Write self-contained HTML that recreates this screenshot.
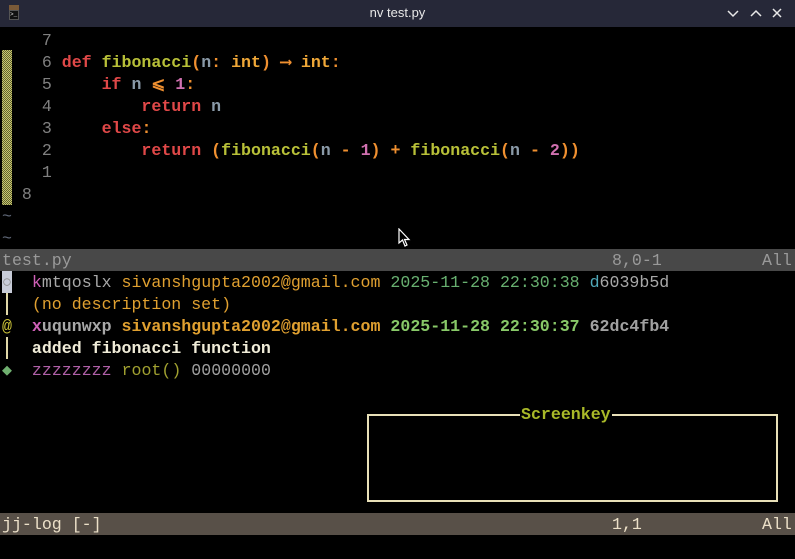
<!DOCTYPE html>
<html><head><meta charset="utf-8"><style>
html,body{margin:0;padding:0;background:#000;width:795px;height:559px;overflow:hidden;position:relative;font-family:"Liberation Mono","DejaVu Sans Mono",monospace;}
.r{position:absolute;left:2px;height:22px;line-height:24px;font-size:16.6px;white-space:pre;color:#a8a8a8;}
.tb{position:absolute;left:0;top:0;width:795px;height:27px;background:#262838;}
.tt{position:absolute;top:0;width:795px;text-align:center;line-height:26px;font-family:"Liberation Sans",sans-serif;font-size:13px;color:#e8e8e8;}
.ln{color:#808080;font-weight:normal}.k{color:#e04848}.f{color:#b8c038}.p{color:#f09030}.n{color:#8a9aa8}.t{color:#f0a838}.num{color:#d070b0}
.pk{color:#d060b8}.em{color:#e0a030}.dt{color:#68b070}.tl{color:#50a8b8}.gy{color:#a0a0a0}
.c{font-weight:bold}
b{font-weight:bold}
.sb{position:absolute;left:0;width:795px;height:22px;}
</style></head><body>
<div class="tb"></div>
<div style="position:absolute;left:9px;top:5px;width:10px;height:5px;background:#7a5a38"></div>
<div style="position:absolute;left:9px;top:10px;width:10px;height:10px;background:#111;border:1px solid #555;box-sizing:border-box;color:#ddd;font-size:6px;line-height:8px">&gt;_</div>
<div class="tt">nv test.py</div>
<svg style="position:absolute;left:724px;top:6px" width="60" height="16" viewBox="0 0 60 16" fill="none" stroke="#e8e8e8" stroke-width="1.5">
<path d="M4 5 L9 10 L14 5"/><path d="M27 10 L32 5 L37 10"/><path d="M49 3 L57 11 M57 3 L49 11"/></svg>

<div style="position:absolute;left:2px;top:50px;width:10px;height:155px;background:repeating-conic-gradient(#c8c870 0 25%,#606030 0 50%) 0 0/2px 2px"></div>

<div class="r" style="top:29px"><span class="ln">    7</span></div>
<div class="r c" style="top:51px"><span class="ln">    6 </span><span class="k">def</span> <span class="f">fibonacci</span><span class="p">(</span><span class="n">n</span><span class="p">:</span> <span class="t">int</span><span class="p">)</span> <span class="p">⟶</span> <span class="t">int</span><span class="p">:</span></div>
<div class="r c" style="top:73px"><span class="ln">    5 </span>    <span class="k">if</span> <span class="n">n</span> <span class="p">⩽</span> <span class="num">1</span><span class="p">:</span></div>
<div class="r c" style="top:95px"><span class="ln">    4 </span>        <span class="k">return</span> <span class="n">n</span></div>
<div class="r c" style="top:117px"><span class="ln">    3 </span>    <span class="k">else</span><span class="p">:</span></div>
<div class="r c" style="top:139px"><span class="ln">    2 </span>        <span class="k">return</span> <span class="p">(</span><span class="f">fibonacci</span><span class="p">(</span><span class="n">n</span> <span class="p">-</span> <span class="num">1</span><span class="p">)</span> <span class="p">+</span> <span class="f">fibonacci</span><span class="p">(</span><span class="n">n</span> <span class="p">-</span> <span class="num">2</span><span class="p">))</span></div>
<div class="r" style="top:161px"><span class="ln">    1</span></div>
<div class="r" style="top:183px"><span class="ln">  8</span></div>
<div class="r" style="top:205px;color:#606878">~</div>
<div class="r" style="top:227px;color:#606878">~</div>

<svg style="position:absolute;left:398px;top:228px" width="14" height="20" viewBox="0 0 14 20"><path d="M1 1 L1 15 L4.5 12 L7 18 L9 17 L6.5 11.5 L11 11.5 Z" fill="#000" stroke="#fff" stroke-width="1.2"/></svg>

<div class="sb" style="top:249px;background:#484848"></div>
<div class="r" style="top:249px;color:#9a9a9a">test.py</div>
<div class="r" style="top:249px;left:612px;color:#9a9a9a">8,0-1</div>
<div class="r" style="top:249px;left:762px;color:#9a9a9a">All</div>

<div style="position:absolute;left:2px;top:271px;width:10px;height:22px;background:#c8ccd8"></div>
<div class="r" style="top:271px"><span style="color:#888">○</span>  <span class="pk">k</span>mtqoslx <span class="em">sivanshgupta2002@gmail.com</span> <span class="dt">2025-11-28 22:30:38</span> <span class="tl">d</span>6039b5d</div>
<div style="position:absolute;left:6px;top:293px;width:2px;height:22px;background:#e0d8a8"></div>
<div class="r" style="top:293px">   <span class="em">(no description set)</span></div>
<div class="r" style="top:315px"><span style="color:#c8c038">@</span>  <b><span class="pk">x</span>uqunwxp <span class="em">sivanshgupta2002@gmail.com</span> <span style="color:#88c868">2025-11-28 22:30:37</span> <span class="gy">62dc4fb4</span></b></div>
<div style="position:absolute;left:6px;top:337px;width:2px;height:22px;background:#e0d8a8"></div>
<div class="r" style="top:337px;color:#f0ecd8">   <b>added fibonacci function</b></div>
<div class="r" style="top:359px"><span style="color:#70b070">◆</span>  <span style="color:#b060a8">zzzzzzzz</span> <span style="color:#a0a030">root()</span> <span class="gy">00000000</span></div>

<div style="position:absolute;left:367px;top:414px;width:411px;height:88px;border:2px solid #e8e0b8;box-sizing:border-box"></div>
<div class="r" style="top:403px;left:520px;background:#000;color:#a8b828;padding:0 1px;font-weight:bold">Screenkey</div>

<div class="sb" style="top:513px;background:#585048"></div>
<div class="r" style="top:513px;color:#ece0c8">jj-log [-]</div>
<div class="r" style="top:513px;left:612px;color:#ece0c8">1,1</div>
<div class="r" style="top:513px;left:762px;color:#ece0c8">All</div>
</body></html>
